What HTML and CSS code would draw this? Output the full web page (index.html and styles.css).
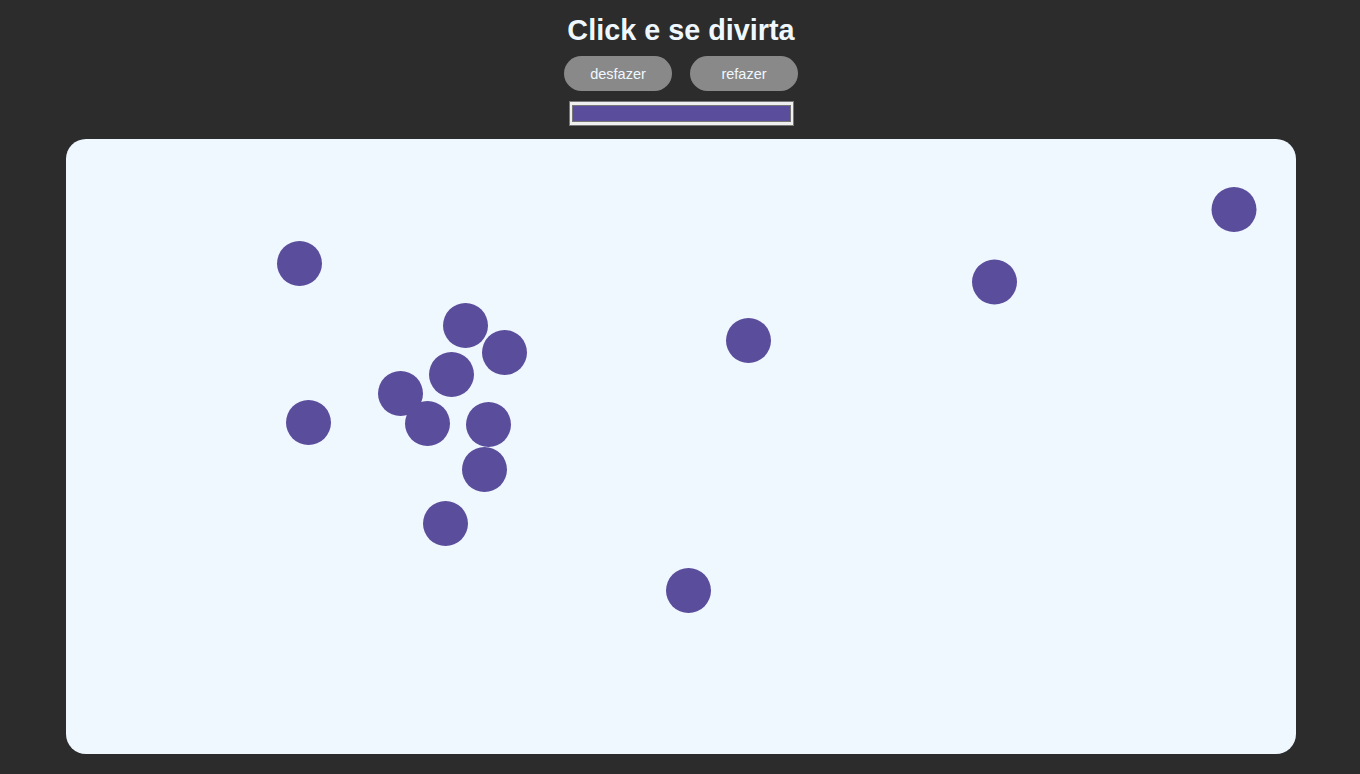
FILE: index.html
```html
<!DOCTYPE html>
<html lang="pt">
<head>
<meta charset="utf-8">
<title>Click e se divirta</title>
<link rel="stylesheet" href="styles.css">
</head>
<body>
<main class="app">
  <h1 class="title">Click e se divirta</h1>
  <div class="controls">
    <button class="btn">desfazer</button>
    <button class="btn">refazer</button>
  </div>
  <input class="color" type="color" value="#5a4d9b">
  <div class="board">
    <svg class="dots" width="1230" height="615" viewBox="0 0 1230 615">
      <g fill="#5a4d9b">
        <circle cx="233.5" cy="124.5" r="22.5"/>
        <circle cx="1168" cy="70.5" r="22.5"/>
        <circle cx="928.5" cy="143" r="22.5"/>
        <circle cx="399.5" cy="186.5" r="22.5"/>
        <circle cx="438.5" cy="213.5" r="22.5"/>
        <circle cx="682.5" cy="201.5" r="22.5"/>
        <circle cx="385.5" cy="235.5" r="22.5"/>
        <circle cx="334.5" cy="254.5" r="22.5"/>
        <circle cx="242.5" cy="283.5" r="22.5"/>
        <circle cx="361.5" cy="284.5" r="22.5"/>
        <circle cx="422.5" cy="285.5" r="22.5"/>
        <circle cx="418.5" cy="330.5" r="22.5"/>
        <circle cx="379.5" cy="384.5" r="22.5"/>
        <circle cx="622.5" cy="451.5" r="22.5"/>
      </g>
    </svg>
  </div>
</main>
</body>
</html>
```
FILE: styles.css
```css
html, body {
  margin: 0;
  padding: 0;
}
body {
  background: #2c2c2c;
  font-family: "Liberation Sans", Arial, sans-serif;
  color: #f0f8ff;
}
.app {
  display: flex;
  flex-direction: column;
  align-items: center;
  padding-top: 14px;
  padding-left: 2px;
}
.title {
  margin: 0;
  font-size: 28.8px;
  line-height: 32px;
  font-weight: bold;
  color: #f0f8ff;
}
.controls {
  display: flex;
  gap: 18px;
  margin-top: 10px;
}
.btn {
  width: 108px;
  height: 35px;
  border: none;
  border-radius: 18px;
  background: #898989;
  color: #f0f8ff;
  font-family: "Liberation Sans", Arial, sans-serif;
  font-size: 14.5px;
  padding: 0;
}
.color {
  display: block;
  margin: 10px 0 0;
  width: 225px;
  height: 25px;
  box-sizing: border-box;
  padding: 3px 2px;
  border: 1px solid #767676;
  background: #efefef;
}
.color::-webkit-color-swatch-wrapper {
  padding: 0;
}
.color::-webkit-color-swatch {
  border: 1px solid #777777;
}
.board {
  margin-top: 13px;
  width: 1230px;
  height: 615px;
  background: #f0f8ff;
  border-radius: 20px;
  overflow: hidden;
}
.dots {
  display: block;
}
```
